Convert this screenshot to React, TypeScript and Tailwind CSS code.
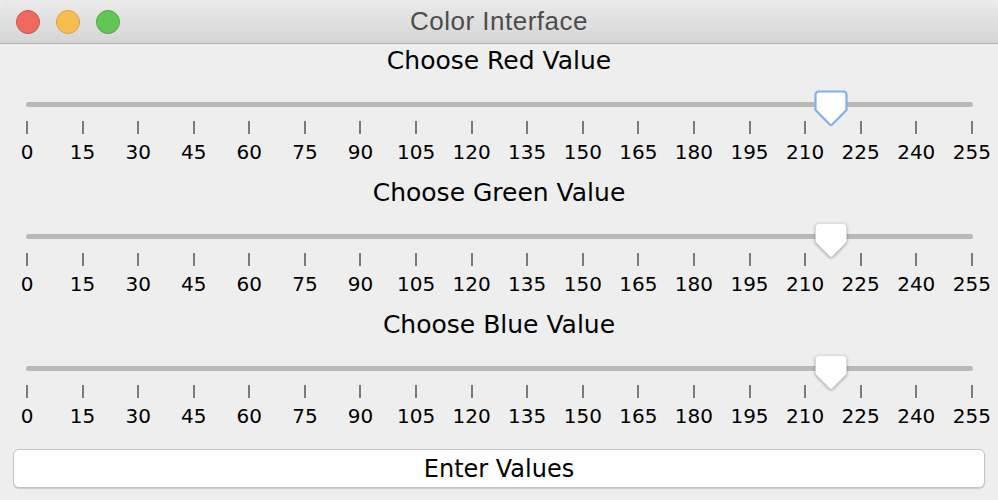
import React from "react";

const TICKS = Array.from({ length: 18 }, (_, i) => i * 15);

const Thumb: React.FC<{ focused?: boolean }> = ({ focused }) => (
  <svg
    width="34"
    height="38"
    viewBox="0 0 34 38"
    className={focused ? "" : "drop-shadow-[0_1px_1.5px_rgba(0,0,0,0.35)]"}
  >
    <path
      d="M5 1.5 H29 Q32.5 1.5 32.5 5 V20 L18.2 34.5 Q17 35.6 15.8 34.5 L1.5 20 V5 Q1.5 1.5 5 1.5 Z"
      fill="#ffffff"
      stroke={focused ? "#7eb0f2" : "#d4d4d4"}
      strokeWidth={focused ? 2.2 : 0.6}
      strokeLinejoin="round"
    />
  </svg>
);

const ColorSlider: React.FC<{ label: string; value: number; focused?: boolean }> = ({
  label,
  value,
  focused,
}) => {
  const center = 27 + (value / 255) * 945;
  return (
    <section className="h-[132px] flex flex-col">
      <div className="h-[34px] flex items-center justify-center text-[25px] text-black">
        {label}
      </div>
      <div className="relative flex-1">
        <div className="mt-[24px] ml-[26px] mr-[25px] h-[5px] rounded-full bg-[#b9b9b9]" />
        <div className="mt-[14px] flex justify-between pl-[27px] pr-[26px]">
          {TICKS.map((t) => (
            <div key={t} className="w-0 flex flex-col items-center">
              <div className="w-[2px] h-[13px] bg-[#7a7a7a] shrink-0" />
              <span className="mt-[5px] text-[20px] leading-[26px] text-black whitespace-nowrap">
                {t}
              </span>
            </div>
          ))}
        </div>
        <div className="absolute top-[12px]" style={{ left: center - 17 }}>
          <Thumb focused={focused} />
        </div>
      </div>
    </section>
  );
};

export default function App() {
  return (
    <div className="w-[998px] h-[500px] bg-[#eeeeee] overflow-hidden font-['DejaVu_Sans',sans-serif]">
      <header className="relative h-[44px] flex items-center justify-center rounded-t-[6px] bg-gradient-to-b from-[#ebebeb] to-[#d5d5d5] border-b border-[#b4b4b4]">
        <div className="absolute left-[16px] top-[10px] flex gap-[16px]">
          <span className="w-[24px] h-[24px] rounded-full bg-[#ee6a5f] border border-[#d65048]" />
          <span className="w-[24px] h-[24px] rounded-full bg-[#f6be4f] border border-[#d9a13f]" />
          <span className="w-[24px] h-[24px] rounded-full bg-[#62c655] border border-[#4da83f]" />
        </div>
        <span className="text-[26px] tracking-[0.5px] text-[#4d4d4d] font-['Liberation_Sans',sans-serif]">
          Color Interface
        </span>
      </header>
      <main className="flex flex-col">
        <ColorSlider label="Choose Red Value" value={217} focused />
        <ColorSlider label="Choose Green Value" value={217} />
        <ColorSlider label="Choose Blue Value" value={217} />
        <div className="px-[13px] pt-[9px]">
          <button className="w-full h-[39px] rounded-[6px] bg-white border border-[#c4c4c4] shadow-[0_1px_1px_rgba(0,0,0,0.15)] text-[24px] text-black">
            Enter Values
          </button>
        </div>
      </main>
    </div>
  );
}
